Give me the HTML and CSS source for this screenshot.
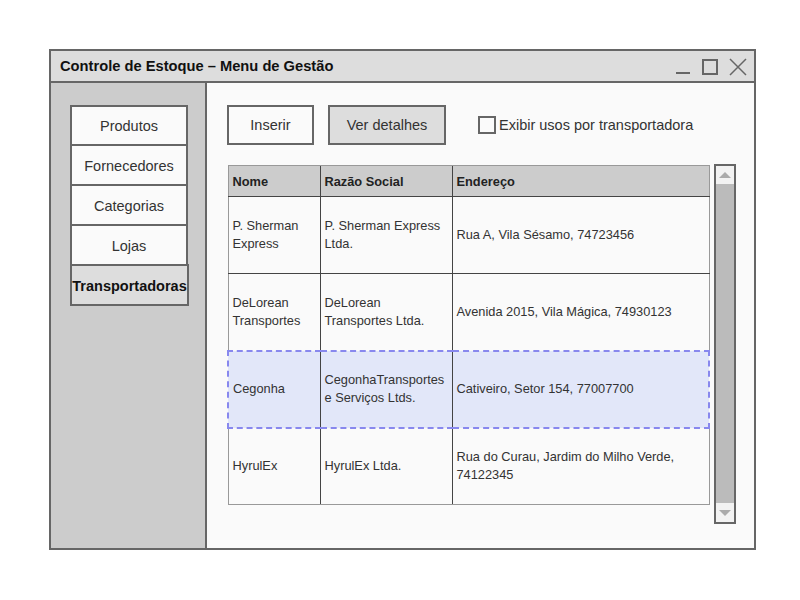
FILE: index.html
```html
<!DOCTYPE html>
<html>
<head>
<meta charset="utf-8">
<link rel="stylesheet" href="styles.css">
</head>
<body>
<div class="window">
  <div class="titlebar">
    <span class="title">Controle de Estoque – Menu de Gestão</span>
    <div class="controls">
      <svg width="16" height="16" viewBox="0 0 16 16"><line x1="1" y1="14" x2="15" y2="14" stroke="#666" stroke-width="2"/></svg>
      <svg width="16" height="16" viewBox="0 0 16 16"><rect x="1" y="1" width="14" height="14" fill="none" stroke="#666" stroke-width="2"/></svg>
      <svg width="18" height="18" viewBox="0 0 18 18"><path d="M1 1 L17 17 M17 1 L1 17" stroke="#666" stroke-width="1.5" fill="none"/></svg>
    </div>
  </div>
  <div class="body">
    <nav class="sidebar">
      <div class="navbtn">Produtos</div>
      <div class="navbtn">Fornecedores</div>
      <div class="navbtn">Categorias</div>
      <div class="navbtn">Lojas</div>
      <div class="navbtn active">Transportadoras</div>
    </nav>
    <main class="main">
      <div class="toolbar">
        <div class="btn btn-insert">Inserir</div>
        <div class="btn btn-details">Ver detalhes</div>
        <label class="check"><span class="box"></span>Exibir usos por transportadora</label>
      </div>
      <div class="grid-area">
        <table class="grid">
          <colgroup><col class="c1"><col class="c2"><col class="c3"></colgroup>
          <thead>
            <tr><th>Nome</th><th>Razão Social</th><th>Endereço</th></tr>
          </thead>
          <tbody>
            <tr><td>P. Sherman<br>Express</td><td>P. Sherman Express<br>Ltda.</td><td>Rua A, Vila Sésamo, 74723456</td></tr>
            <tr><td>DeLorean<br>Transportes</td><td>DeLorean<br>Transportes Ltda.</td><td>Avenida 2015, Vila Mágica, 74930123</td></tr>
            <tr class="selected"><td>Cegonha</td><td>CegonhaTransportes<br>e Serviços Ltds.</td><td>Cativeiro, Setor 154, 77007700</td></tr>
            <tr><td>HyrulEx</td><td>HyrulEx Ltda.</td><td>Rua do Curau, Jardim do Milho Verde,<br>74122345</td></tr>
          </tbody>
        </table>
        <div class="scrollbar">
          <div class="sb-end"><span class="tri-up"></span></div>
          <div class="sb-track"></div>
          <div class="sb-end"><span class="tri-down"></span></div>
        </div>
      </div>
    </main>
  </div>
</div>
</body>
</html>
```

FILE: styles.css
```css
* { box-sizing: border-box; }
html, body { margin: 0; padding: 0; background: #ffffff; }
body {
  font-family: "Liberation Sans", Arial, sans-serif;
  color: #222;
}
.window {
  margin: 49px 0 0 49px;
  width: 707px;
  height: 501px;
  border: 2px solid #666;
  display: flex;
  flex-direction: column;
  background: #fafafa;
}
.titlebar {
  height: 32px;
  background: #dddddd;
  border-bottom: 2px solid #666;
  display: flex;
  align-items: center;
  justify-content: space-between;
  padding: 0 7px 0 9px;
}
.title {
  font-weight: bold;
  font-size: 14.7px;
  color: #111;
}
.controls {
  display: flex;
  align-items: center;
  gap: 11px;
  padding-top: 2px;
}
.body {
  flex: 1;
  display: flex;
}
.sidebar {
  width: 156px;
  background: #cccccc;
  border-right: 2px solid #666;
  padding: 22px 0 0 19px;
}
.navbtn {
  width: 118px;
  height: 42px;
  margin-top: -2px;
  padding-top: 1px;
  border: 2px solid #666;
  background: #fafafa;
  display: flex;
  align-items: center;
  justify-content: center;
  font-size: 14.5px;
  color: #333;
}
.navbtn:first-child { margin-top: 0; height: 41px; }
.navbtn.active {
  background: #dddddd;
  font-weight: bold;
  color: #111;
  width: 119px;
}
.main {
  flex: 1;
  padding: 22px 0 0 20px;
}
.toolbar {
  display: flex;
  align-items: center;
  height: 40px;
}
.btn {
  height: 40px;
  border: 2px solid #666;
  display: flex;
  align-items: center;
  justify-content: center;
  font-size: 14.5px;
  color: #333;
}
.btn-insert { width: 87px; background: #fafafa; }
.btn-details { width: 118px; margin-left: 14px; background: #dddddd; }
.check {
  display: flex;
  align-items: center;
  margin-left: 32px;
  font-size: 14.5px;
  color: #333;
}
.box {
  width: 18px;
  height: 18px;
  border: 2px solid #666;
  background: #fafafa;
  margin-right: 3px;
}
.grid-area {
  display: flex;
  align-items: flex-start;
  margin-top: 19px;
}
.grid {
  border-collapse: collapse;
  table-layout: fixed;
  width: 481px;
  margin-top: 1px;
  font-size: 12.8px;
  color: #333;
  border: 1px solid #999;
}
.c1 { width: 92px; }
.c2 { width: 132px; }
.c3 { width: 257px; }
.grid th {
  background: #cccccc;
  font-weight: bold;
  text-align: left;
  height: 31px;
  padding: 0 4px;
  color: #222;
  border-left: 1px solid #444;
  border-bottom: 1px solid #444;
  border-top: 1px solid #999;
}
.grid th:first-child { border-left: 1px solid #999; }
.grid td {
  height: 77px;
  padding: 0 4px;
  line-height: 18px;
  vertical-align: middle;
  border-left: 1px solid #444;
  border-bottom: 1px solid #444;
}
.grid td:first-child { border-left: 1px solid #999; }
.grid tbody tr:last-child td { border-bottom: 1px solid #999; }
.grid tr.selected td {
  background: #e2e7f9;
  border-top: 2px dashed #8888ee;
  border-bottom: 2px dashed #8888ee;
}
.grid tr.selected td:first-child { border-left: 2px dashed #8888ee; }
.grid tr.selected td:last-child { border-right: 2px dashed #8888ee; }
.scrollbar {
  width: 22px;
  height: 360px;
  margin-left: 4px;
  border: 2px solid #666;
  display: flex;
  flex-direction: column;
  background: #bbbbbb;
}
.sb-end {
  height: 18px;
  background: #f2f2f2;
  display: flex;
  align-items: center;
  justify-content: center;
}
.sb-end:last-child { height: 19px; }
.sb-track { flex: 1; background: #bbbbbb; }
.tri-up {
  width: 0; height: 0;
  border-left: 6px solid transparent;
  border-right: 6px solid transparent;
  border-bottom: 6px solid #aaaaaa;
}
.tri-down {
  width: 0; height: 0;
  border-left: 6px solid transparent;
  border-right: 6px solid transparent;
  border-top: 6px solid #aaaaaa;
}
```
